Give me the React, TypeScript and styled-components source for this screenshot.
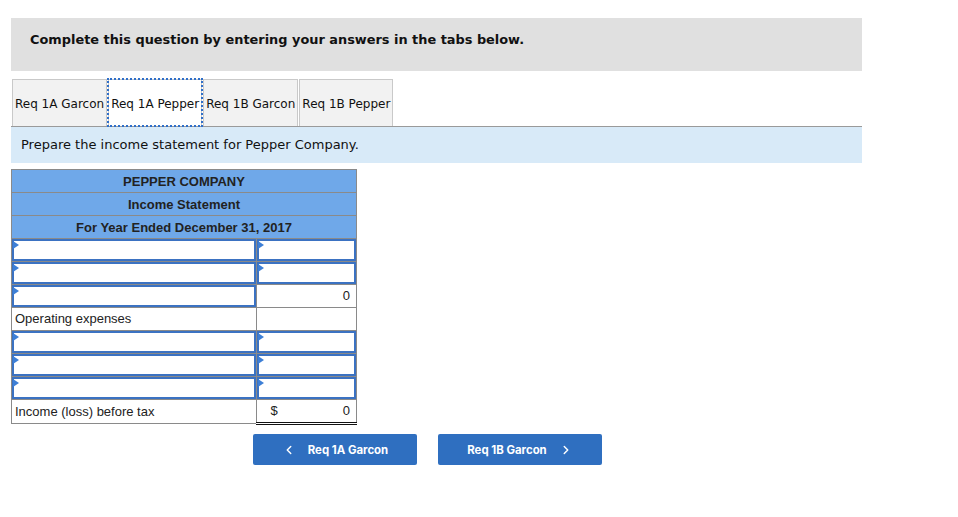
import styled, { createGlobalStyle } from "styled-components";
import { ChevronLeft, ChevronRight } from "lucide-react";

const GlobalStyle = createGlobalStyle`
  body {
    margin: 0;
    background: #fff;
    font-family: "DejaVu Sans", Verdana, sans-serif;
    color: #111;
  }
`;

const Page = styled.div`
  padding: 18px 0 0 11px;
  width: 851px;
`;

const Banner = styled.div`
  box-sizing: border-box;
  height: 53px;
  padding: 14px 19px;
  background: #e0e0e0;
  font-weight: bold;
  font-size: 12.9px;
`;

const Tabs = styled.div`
  display: flex;
  gap: 1px;
  margin: 8px 0 0 1px;
`;

const Tab = styled.div<{ $active?: boolean }>`
  box-sizing: border-box;
  height: 47px;
  display: flex;
  align-items: center;
  padding: 2px 2px 0;
  font-size: 12px;
  background: ${(p) => (p.$active ? "#fff" : "#f2f2f2")};
  border: 1px solid #c9c9c9;
  border-bottom: none;
  outline: ${(p) => (p.$active ? "2px dotted #2f6fc9" : "none")};
  outline-offset: ${(p) => (p.$active ? "-1px" : "0")};
`;

const Instruction = styled.div`
  box-sizing: border-box;
  height: 37px;
  border-top: 1px solid #9a9a9a;
  background: #d8eaf8;
  padding: 10px 10px;
  font-size: 13px;
`;

const Sheet = styled.table`
  margin-top: 6px;
  border-collapse: collapse;
  width: 346px;
  font-family: "Liberation Sans", Arial, sans-serif;
  font-size: 13px;
  color: #222;
`;

const HeadCell = styled.th`
  height: 22px;
  padding: 0;
  background: #6fa8e9;
  border: 1px solid #8a8a8a;
  font-weight: bold;
  font-size: 13px;
  text-align: center;
`;

const Cell = styled.td<{ $wide?: boolean; $sum?: boolean; $total?: boolean }>`
  height: 22px;
  padding: 0;
  width: ${(p) => (p.$wide ? "245px" : "100px")};
  border: 1px solid #8a8a8a;
  border-top: ${(p) => (p.$sum ? "1px solid #111" : "1px solid #8a8a8a")};
  border-bottom: ${(p) => (p.$total ? "3px double #111" : "1px solid #8a8a8a")};
`;

const Field = styled.div`
  box-sizing: border-box;
  height: 22px;
  border: 2px solid #3b72c2;
  position: relative;

  &::before {
    content: "";
    position: absolute;
    top: 0;
    left: -1px;
    border-top: 4px solid transparent;
    border-bottom: 4px solid transparent;
    border-left: 6px solid #3d7fd6;
  }
`;

const Label = styled.div`
  padding: 0 3px;
  line-height: 22px;
`;

const Amount = styled.div`
  display: flex;
  justify-content: space-between;
  padding: 0 6px 0 14px;
  line-height: 22px;
`;

const Nav = styled.div`
  display: flex;
  gap: 21px;
  margin: 9px 0 0 242px;
`;

const NavButton = styled.button`
  box-sizing: border-box;
  width: 164px;
  height: 31px;
  border: none;
  border-radius: 2px;
  background: #2f6fc0;
  color: #fff;
  font-family: Inter, "Liberation Sans", sans-serif;
  font-weight: bold;
  font-size: 11.4px;
  display: flex;
  align-items: center;
  justify-content: center;
  gap: 12px;
  padding: 0;
`;

function InputRow() {
  return (
    <tr>
      <Cell $wide>
        <Field />
      </Cell>
      <Cell>
        <Field />
      </Cell>
    </tr>
  );
}

export default function App() {
  return (
    <Page>
      <GlobalStyle />
      <Banner>Complete this question by entering your answers in the tabs below.</Banner>
      <Tabs>
        <Tab>Req 1A Garcon</Tab>
        <Tab $active>Req 1A Pepper</Tab>
        <Tab>Req 1B Garcon</Tab>
        <Tab>Req 1B Pepper</Tab>
      </Tabs>
      <Instruction>Prepare the income statement for Pepper Company.</Instruction>
      <Sheet>
        <thead>
          <tr>
            <HeadCell colSpan={2}>PEPPER COMPANY</HeadCell>
          </tr>
          <tr>
            <HeadCell colSpan={2}>Income Statement</HeadCell>
          </tr>
          <tr>
            <HeadCell colSpan={2}>For Year Ended December 31, 2017</HeadCell>
          </tr>
        </thead>
        <tbody>
          <InputRow />
          <InputRow />
          <tr>
            <Cell $wide>
              <Field />
            </Cell>
            <Cell $sum>
              <Amount>
                <span />
                <span>0</span>
              </Amount>
            </Cell>
          </tr>
          <tr>
            <Cell $wide>
              <Label>Operating expenses</Label>
            </Cell>
            <Cell />
          </tr>
          <InputRow />
          <InputRow />
          <InputRow />
          <tr>
            <Cell $wide>
              <Label>Income (loss) before tax</Label>
            </Cell>
            <Cell $total>
              <Amount>
                <span>$</span>
                <span>0</span>
              </Amount>
            </Cell>
          </tr>
        </tbody>
      </Sheet>
      <Nav>
        <NavButton>
          <ChevronLeft size={14} strokeWidth={2.5} />
          <span>Req 1A Garcon</span>
        </NavButton>
        <NavButton>
          <span>Req 1B Garcon</span>
          <ChevronRight size={14} strokeWidth={2.5} />
        </NavButton>
      </Nav>
    </Page>
  );
}
